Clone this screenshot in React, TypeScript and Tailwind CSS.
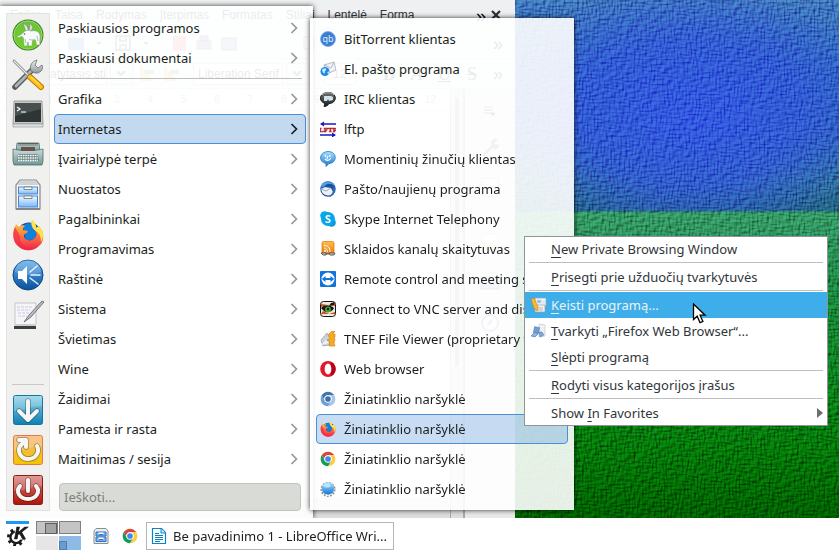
import type { ReactNode } from "react";

type IconProps = { size?: number; box: number; children: ReactNode };

function Svg({ size = 16, box, children }: IconProps) {
  return (
    <svg width={size} height={size} viewBox={`0 0 ${box} ${box}`} aria-hidden="true" className="shrink-0">
      {children}
    </svg>
  );
}

function Gradients() {
  const list: [string, string, string][] = [
    ["gGreen", "#6cc43a", "#6fd01c"],
    ["gBlue", "#5fb0ee", "#0a4f9c"],
    ["gSteel", "#eef1f3", "#8f979c"],
    ["gDown", "#8fd3ea", "#0c7fb4"],
    ["gRestart", "#f5b47c", "#f4c400"],
    ["gPower", "#d9827e", "#b01206"],
    ["gFox", "#ffd83a", "#f2204a"],
    ["gTeal", "#c9dedd", "#6d9594"],
    ["gDrawer", "#f2f8ff", "#7ab8fa"],
    ["gDark", "#6b7173", "#1c1f20"],
    ["gSky", "#a9e2ff", "#1674d0"],
    ["gOrange", "#ffc04a", "#ee7a0a"],
  ];
  return (
    <svg width="0" height="0" className="absolute" aria-hidden="true">
      <defs>
        {list.map(([id, a, b]) => (
          <linearGradient key={id} id={id} x1="0" y1="0" x2="0" y2="1">
            <stop offset="0" stopColor={a} />
            <stop offset="1" stopColor={b} />
          </linearGradient>
        ))}
      </defs>
    </svg>
  );
}

/* ---------- favourites ---------- */

const Aardvark = () => (
  <Svg size={32} box={32}>
    <circle cx="16" cy="16" r="15.500" fill="#3a7d22" />
    <circle cx="16" cy="16" r="14.200" fill="url(#gGreen)" stroke="#a9dc82" strokeWidth=".8" />
    <path d="M14 13L11 4l4 3 2 6z" fill="#e4ebe4" stroke="#6d8870" strokeWidth=".6" />
    <path d="M17 12l1-8 3 4-2 5z" fill="#d3ddd3" stroke="#6d8870" strokeWidth=".6" />
    <path
      d="M5 17.500l4-2 4-3.500c2-1 4-1 6 0 4-1 8 0 9 4 .500 3-.500 5 0 10h-3.500l-1-5-3 .500-.500 5.500H16.500l-.500-4-1 4H12l-.500-7c-.500-2-1-2.500-2-2.500L5.500 19z"
      fill="#f8faf8"
      stroke="#7f9c82"
      strokeWidth=".6"
    />
    <path d="M17 20c2 1.500 4 1 6 0M13 20l1 4M25 17l1 5" stroke="#b4c2b5" fill="none" />
    <circle cx="12.500" cy="15" r=".8" fill="#44524a" />
  </Svg>
);

const Tools = () => (
  <Svg size={32} box={32}>
    <path d="M3 28L21 10" stroke="#55595b" strokeWidth="5.500" strokeLinecap="round" />
    <path d="M4 27L21 10" stroke="#aeb4b7" strokeWidth="3" strokeLinecap="round" />
    <path d="M19 12c-2-5 1-10 6-11l-2 5 3 3 4-3c2 4-2 9-7 8z" fill="url(#gSteel)" stroke="#666c70" strokeWidth=".8" />
    <path d="M2 2l15 15" stroke="#777d80" strokeWidth="2.600" strokeLinecap="round" />
    <path d="M2 2l15 15" stroke="#eceeef" strokeWidth="1.200" strokeLinecap="round" />
    <path d="M18 18l11 10" stroke="#b97800" strokeWidth="6" strokeLinecap="round" />
    <path d="M18 18l11 10" stroke="#ffc21a" strokeWidth="4" strokeLinecap="round" />
    <path d="M19 18l9 8" stroke="#ffe88a" strokeWidth="1" />
  </Svg>
);

const Terminal = () => (
  <Svg size={32} box={32}>
    <path d="M2 2h28l1 23H1z" fill="#c7caca" stroke="#8d9192" strokeWidth=".8" />
    <rect x="3" y="4" width="26" height="19" fill="#2f3434" />
    <path d="M3 4h26v6L3 17z" fill="#4a5050" />
    <path d="M1 25h30v3H1z" fill="#dfe1e1" stroke="#8d9192" strokeWidth=".6" />
    <path d="M5 8l3 2-3 2M9 13h5" stroke="#fff" strokeWidth="1.200" fill="none" />
  </Svg>
);

const Typewriter = () => (
  <Svg size={32} box={32}>
    <path d="M5 4h22l1 9H4z" fill="url(#gTeal)" stroke="#506c6c" strokeWidth=".8" />
    <rect x="6" y="4" width="20" height="3" fill="#565f60" />
    <path d="M6 6h20" stroke="#c8dddd" />
    <path d="M1 10c6 2 24 2 30 0v12l-1 4H2l-1-4z" fill="url(#gTeal)" stroke="#506c6c" strokeWidth=".8" />
    <path d="M9 8h14v4H9z" fill="#6c4f47" />
    <path d="M6 15h20l1 7H5z" fill="#6d8482" />
    <path d="M6 16.500h20M6 19h20M6 21.500h20" stroke="#f3f8f6" strokeWidth="1.500" strokeDasharray="1.700 .7" />
  </Svg>
);

const Cabinet = () => (
  <Svg size={32} box={32}>
    <path d="M8 1h16l4 5v24H4V6z" fill="#f6f6f7" stroke="#84888a" strokeWidth="1.200" />
    <path d="M8 2h16l3 4H5z" fill="#cfd2d4" />
    <rect x="6.500" y="8" width="19" height="7" fill="url(#gDrawer)" stroke="#4a86cc" />
    <rect x="6.500" y="17" width="19" height="11" fill="url(#gDrawer)" stroke="#4a86cc" />
    <path d="M12 8h8v2.500h-8zM12 17h8v2.500h-8z" fill="#fff" stroke="#686e72" strokeWidth=".8" />
    <path d="M4 30h24" stroke="#6f7375" strokeWidth="1.500" />
  </Svg>
);

const SmallCabinet = () => (
  <Svg box={16}>
    <path d="M3 .5h10l2 2.500v12.500H1V3z" fill="#eceded" stroke="#8b8f92" />
    <path d="M3 4h10v4H3zM3 9h10v4.500H3z" fill="#6cb0f6" stroke="#2f74c4" />
    <path d="M5.500 5.500h5M5.500 10.500h5" stroke="#fff" strokeWidth="2" />
    <path d="M6 6.500h4M6 11.500h4" stroke="#3b5068" strokeWidth=".8" />
  </Svg>
);

const Firefox = ({ size = 32 }: { size?: number }) => (
  <Svg size={size} box={32}>
    <circle cx="17" cy="16" r="12.500" fill="#15429f" />
    <path d="M11 7c4-4 10-4 14 1l-2 12-9 2z" fill="#1180dc" />
    <path
      d="M20 1c4 3 4 6 4 8l3-2c6 7 5 15 1 19-6 7-17 7-23 0C1 22 0 14 3 8l1-3 3 3c2-2 5-2 6-1-2 1-2 3-2 4l5 1c-1 3-4 3-4 4 0 6 7 7 11 3 2-3 2-7-1-9-2-1-3-5-2-9z"
      fill="url(#gFox)"
    />
    <path d="M3 8c-3 6-2 14 2 18 6 7 15 6 20 2-9 3-18-2-17-11z" fill="#f22a48" opacity=".7" />
    <path d="M20 1c4 3 4 6 4 8l3-2c6 7 4 13 2 16 0-5-1-8-4-10-4-3-7-7-5-12z" fill="#ffe24a" />
  </Svg>
);

const Speaker = () => (
  <Svg size={32} box={32}>
    <circle cx="16" cy="16" r="15" fill="url(#gBlue)" stroke="#0d4687" />
    <path d="M3 13a13 13 0 0126 0c-8 4-18 4-26 0z" fill="#fff" opacity=".18" />
    <path d="M6 12h4l5-5v18l-5-5H6z" fill="#fff" />
    <path d="M18 13l7-6M19 16h9M18 19l8 6" stroke="#e8f4ff" strokeWidth="1.400" strokeLinecap="round" />
  </Svg>
);

const Writing = () => (
  <Svg size={32} box={32}>
    <path d="M3 4h21v22H3z" fill="#f5f5f7" stroke="#c4c5c8" />
    <path d="M5 8h15M5 11h13M6 14h12M6 17h9" stroke="#c9c8e6" strokeDasharray="3 1" />
    <path d="M2 27h22v3H2z" fill="#3b3e40" />
    <path d="M3 26h20" stroke="#bfc1c3" />
    <path d="M30 2L17 16l-5 7 7-5L32 3z" fill="#b8bcbe" stroke="#5c6062" strokeWidth=".8" />
  </Svg>
);

function Tile({ fill, edge, children }: { fill: string; edge: string; children: ReactNode }) {
  return (
    <Svg size={32} box={32}>
      <rect x="1.500" y="1.500" width="29" height="29" rx="2" fill={fill} stroke={edge} />
      <path d="M2 2h28v10C20 12 12 17 2 17z" fill="#fff" opacity=".2" />
      <g fill="none" strokeLinecap="round" strokeLinejoin="round" stroke="#00000055" strokeWidth="5.500">{children}</g>
      <g fill="none" strokeLinecap="round" strokeLinejoin="round" stroke="#f6f6f4" strokeWidth="4">{children}</g>
    </Svg>
  );
}

const Suspend = () => (
  <Tile fill="url(#gDown)" edge="#1477a0">
    <path d="M16 7v18M7 17l9 9 9-9" />
  </Tile>
);
const Restart = () => (
  <Tile fill="url(#gRestart)" edge="#e67a3c">
    <path d="M7 6h7v7M13 7L8 12c-3 6 1 13 8 13 8 0 12-7 9-13" />
  </Tile>
);
const Power = () => (
  <Tile fill="url(#gPower)" edge="#8f1a12">
    <path d="M16 6v11M8 12c-5 6 0 13 8 13s13-7 8-13" />
  </Tile>
);

/* ---------- applications ---------- */

const Torrent = () => (
  <Svg box={16}>
    <circle cx="8" cy="8" r="7.500" fill="#3c7fd0" stroke="#79aee6" strokeWidth=".8" />
    <text x="8" y="11" textAnchor="middle" fontSize="9" fill="#d8ecff" fontFamily="Noto Sans, sans-serif">qb</text>
  </Svg>
);
const Mail = () => (
  <Svg box={16}>
    <path d="M4 4l10-3 2 8-9 4z" fill="#f0f2f8" stroke="#9da3b4" strokeWidth=".7" />
    <path d="M4 4l7 3 3-6" fill="none" stroke="#a9aec0" strokeWidth=".8" />
    <circle cx="5" cy="10.500" r="4.500" fill="#2387e6" />
    <path d="M2 9c2-3 3 0 4-2 1 2-2 3-1 5-2 1-2-1-3-3zM7 12l2-2v3z" fill="#c6f0ff" />
  </Svg>
);
const Irc = () => (
  <Svg box={16}>
    <path d="M8 1.500c10 0 9 11 1 11-1 2-3 3-5 3l1-3C-2 10-1 2 8 1.500z" fill="url(#gDark)" stroke="#17191a" />
    <path d="M4 5h7l2 1v3l-4 1-1-2-1 2H4z" fill="#d4e1e9" />
    <path d="M2 4c3-3 9-3 12 0" stroke="#aeb6ba" fill="none" />
  </Svg>
);
const Lftp = () => (
  <Svg box={16}>
    <path d="M1 3h15M0 14h15" stroke="#2118c0" strokeWidth="1.600" />
    <path d="M0 3l4-2.500v5zM16 14l-4-2.500v5z" fill="#2118c0" />
    <text x="8" y="11" textAnchor="middle" fontSize="7" fontWeight="bold" fill="#b01018" stroke="#b01018" strokeWidth=".4" fontFamily="Liberation Serif, serif">LFTP</text>
  </Svg>
);
const Chat = () => (
  <Svg box={16}>
    <path d="M8 .5c10 0 9 12 1 12l-3 3v-3C-2 11-1 1 8 .500z" fill="url(#gSky)" stroke="#1a79b8" strokeWidth=".8" />
    <path d="M5 4l1 2M10 4v2M5 8c2 2 4 2 6-1M8 5l-1 3" stroke="#fff" strokeWidth="1.200" fill="none" />
  </Svg>
);
const Thunderbird = () => (
  <Svg box={16}>
    <circle cx="8" cy="8" r="7.700" fill="#1d4f9e" />
    <path d="M2 3C5-1 13 0 15 5c-4-3-8-3-10 0L0 7z" fill="#4ba0e8" />
    <path d="M1 8l4-2 6 1 2 4c-1 5-9 4-11 0z" fill="#eef1f3" />
    <path d="M1 8l5 2 5-3" stroke="#9caab8" fill="none" />
    <path d="M13 4c4 5 1 11-4 12 4-3 5-7 4-12z" fill="#2e72c6" />
  </Svg>
);
const Skype = () => (
  <Svg box={16}>
    <circle cx="4.500" cy="4.500" r="4.300" fill="#00aff0" />
    <circle cx="11.500" cy="11.500" r="4.300" fill="#0a95dc" />
    <circle cx="8" cy="8" r="7" fill="#08a5e8" />
    <text x="8" y="12" textAnchor="middle" fontSize="11" fontWeight="bold" fill="#fff" fontFamily="Noto Sans, sans-serif">S</text>
  </Svg>
);
const Feed = () => (
  <Svg box={16}>
    <rect x="2" y=".5" width="12" height="12" rx="1.500" fill="url(#gOrange)" stroke="#d8720c" strokeWidth=".7" />
    <circle cx="5" cy="10" r="1" fill="#fff" />
    <path d="M4 7c2 0 3.500 1.500 3.500 4M4 4.500c4 0 6 2 6 6.500" stroke="#fff" strokeWidth="1" fill="none" />
    <path d="M1 12h5v2H3zM9 12h6l-1 2h-4zM6 13h3" stroke="#555" fill="#ddd" />
  </Svg>
);
const Remote = () => (
  <Svg box={16}>
    <rect width="16" height="16" rx="1" fill="#1273dc" />
    <circle cx="8" cy="8" r="6.500" fill="#fff" />
    <path d="M1.800 8l3.700-3v2h5V5l3.700 3-3.700 3V9h-5v2z" fill="#1273dc" />
  </Svg>
);
const Vnc = () => (
  <Svg box={16}>
    <rect x=".5" y=".5" width="15" height="15" rx="3" fill="#f4e8dc" stroke="#171717" />
    <path d="M1 3l7 1 7-1v2L7 4 1 6zM1 13h14v-2l-6 2-6-3z" fill="#c65020" />
    <path d="M1 7c4-4 9-3 13 0-2 5-9 6-13 0z" fill="#171b15" />
    <circle cx="8" cy="8.500" r="2.900" fill="#44a42c" />
    <circle cx="8" cy="8" r="1.200" fill="#0b1608" />
    <path d="M11 2l4-1-1 3-5 1z" fill="#171717" />
  </Svg>
);
const Tnef = () => (
  <Svg box={16}>
    <path d="M1 9l6-7 4 6-2 6-6 1z" fill="#cdd3dc" stroke="#858b94" strokeWidth=".6" />
    <path d="M1 14l8-2-3-3z" fill="#eef1f5" />
    <path d="M8 4l4-4h3l-2 3h2v3h-1l1 2-1 4 1 3H9l1-4-3-2 3-1z" fill="#f5ac23" stroke="#cd7a12" strokeWidth=".6" />
  </Svg>
);
const Opera = () => (
  <Svg box={16}>
    <ellipse cx="8" cy="8" rx="7.800" ry="8" fill="#e2172c" />
    <path d="M11 1c6 3 6 11 0 14z" fill="#b8001a" />
    <ellipse cx="8" cy="8" rx="3.400" ry="5.400" fill="#fff" />
  </Svg>
);

type ChromeColors = { a: string; b: string; c: string; core: string };
const ChromeShape = ({ a, b, c, core }: ChromeColors) => (
  <Svg box={48}>
    <path d="M24 13H43.050A22 22 0 0 0 4.950 13L14.470 29.500A11 11 0 0 1 24 13z" fill={a} />
    <path d="M33.530 29.500L24 46A22 22 0 0 0 43.050 13H24A11 11 0 0 1 33.530 29.500z" fill={b} />
    <path d="M14.470 29.500L4.950 13A22 22 0 0 0 24 46L33.530 29.500z" fill={c} />
    <circle cx="24" cy="24" r="11" fill="#fff" />
    <circle cx="24" cy="24" r="8.500" fill={core} />
  </Svg>
);
const Chrome = () => <ChromeShape a="#db4437" b="#ffcd40" c="#0f9d58" core="#4285f4" />;
const Chromium = () => <ChromeShape a="#4374ac" b="#a4c6ea" c="#6e9fd2" core="#3f70ac" />;

const Konqueror = () => (
  <Svg box={16}>
    <circle cx="8" cy="8.500" r="6.600" fill="none" stroke="#8b9399" strokeWidth="2" strokeDasharray="1.800 1.400" />
    <circle cx="8" cy="7.500" r="6.200" fill="url(#gSky)" />
    <path d="M6 13l2 2 3-2" stroke="#e4ecf1" fill="none" />
    <ellipse cx="7" cy="4.500" rx="3.500" ry="2" fill="#c8ecff" opacity=".8" />
  </Svg>
);

const KLogo = () => (
  <Svg size={22} box={24}>
    <circle cx="10" cy="14.500" r="8.500" fill="none" stroke="#17191b" strokeWidth="3" strokeDasharray="3 3.670" />
    <circle cx="10" cy="14.500" r="6.300" fill="none" stroke="#17191b" strokeWidth="2.600" />
    <path d="M8 1h13l1 16H9z" fill="#fff" />
    <text x="8" y="16" fontSize="19" fontWeight="bold" fontStyle="italic" fill="#17191b" stroke="#17191b" strokeWidth=".8" fontFamily="Liberation Sans, sans-serif">K</text>
  </Svg>
);

const WriterDoc = () => (
  <Svg box={16}>
    <path d="M1.500 .5h9l4 4v11h-13z" fill="#fff" stroke="#0a84c8" strokeWidth="1.200" />
    <path d="M10 .5v4.500h4.500" fill="#cfe8f6" stroke="#0a84c8" />
    <path d="M4 5.500h4M4 7.500h8M4 9.500h8M4 11.500h8M4 13.500h5" stroke="#0a7cc0" />
  </Svg>
);

const EditApp = () => (
  <Svg box={16}>
    <path d="M4 1h11v8H4z" fill="#f3f7fb" stroke="#8ea7bf" strokeWidth=".8" />
    <path d="M6 3h4v3H6zM11 4h3M11 6h3" fill="#7bb0ea" stroke="#d0dcea" />
    <path d="M4 8h10v7H4z" fill="#f1f1ee" stroke="#97a0aa" strokeWidth=".7" />
    <path d="M6 11h6M6 13h6" stroke="#b9bcc0" />
    <path d="M0 2l3-1 4 9-1 4-3-3z" fill="#f8b92e" stroke="#c98212" strokeWidth=".6" />
  </Svg>
);
const ManageApp = () => (
  <Svg box={16}>
    <path d="M8 1l6 1v11l-6 1z" fill="#eef1f4" stroke="#c5cbd2" strokeWidth=".7" />
    <path d="M3 4h5v6H3z" fill="#6f9fd6" stroke="#4a79b3" strokeWidth=".6" transform="rotate(12 5 7)" />
    <path d="M0 13l4-4 3 2-3 3z" fill="#8fb4de" stroke="#4876a8" strokeWidth=".6" />
    <path d="M8 9h3l2 3-4 2z" fill="#7ea9de" stroke="#4876a8" strokeWidth=".5" />
  </Svg>
);

const Chevron = ({ active }: { active?: boolean }) => (
  <svg width="8" height="12" viewBox="0 0 8 12" fill="none" aria-hidden="true" className={active ? "text-[#1b1e20]" : "text-[#989898]"}>
    <path d="M1.500 1L6.500 6l-5 5" stroke="currentColor" strokeWidth="1.700" />
  </svg>
);

/* ---------- desktop background ---------- */

function Wallpaper() {
  return (
    <div className="absolute inset-0 overflow-hidden bg-[linear-gradient(180deg,#4078bc_0px,#3069c0_70px,#2f68b8_130px,#2f7498_180px,#246488_210px,#359a66_213px,#2f9460_236px,#168636_310px,#0a8016_400px,#047808_450px,#006000_518px)]">
      <div className="absolute top-0 right-0 h-[211px] w-[324px] bg-[radial-gradient(ellipse_at_54%_54%,#3358e0_0%,#3258d8cc_45%,#3a66c400_80%)]" />
      <svg className="absolute inset-0 size-full mix-blend-overlay" aria-hidden="true">
        <filter id="weave" x="0" y="0" width="100%" height="100%" colorInterpolationFilters="sRGB">
          <feTurbulence type="fractalNoise" baseFrequency="0.12 0.6" numOctaves="1" seed="3" result="h" />
          <feTurbulence type="fractalNoise" baseFrequency="0.6 0.12" numOctaves="1" seed="8" result="v" />
          <feComposite in="h" in2="v" operator="arithmetic" k2="0.5" k3="0.5" result="mix" />
          <feDiffuseLighting in="mix" surfaceScale="4" diffuseConstant="0.74" lightingColor="#ffffff">
            <feDistantLight azimuth="225" elevation="45" />
          </feDiffuseLighting>
        </filter>
        <rect width="100%" height="100%" filter="url(#weave)" opacity="0.55" />
      </svg>
    </div>
  );
}

/* ---------- word processor window ---------- */

function WriterWindow() {
  const menus = ["Failas", "Taisa", "Rodymas", "Įterpimas", "Formatas", "Stiliai", "Lentelė", "Forma"];
  return (
    <div className="absolute inset-y-0 left-0 flex w-[515px] flex-col bg-[#eff0f1] font-['Liberation_Sans',sans-serif] text-xs text-[#31363b]">
      <div className="flex h-[29px] items-center gap-[13px] pl-[10px]">
        {menus.map((m) => (
          <span key={m}>{m}</span>
        ))}
        <span className="mt-[2px] ml-auto text-lg leading-4 text-black">»</span>
        <svg width="10" height="10" viewBox="0 0 10 10" className="-ml-2 mr-[14px]" aria-hidden="true">
          <path d="M1 1l8 8M9 1L1 9" stroke="#2b2f33" strokeWidth="2.200" />
        </svg>
      </div>
      <div className="flex h-[30px] items-center gap-6 border-b border-[#d0d2d4] pl-[68px]">
        <svg width="300" height="20" viewBox="0 0 300 20" fill="none" aria-hidden="true">
          <path d="M0 4h16v12H0z" fill="#5a97d8" />
          <path d="M28 8h6l-3 3zM75 8h6l-3 3z" fill="#555" />
          <path d="M48 2h14v14H48zM52 2v5h6V2M52 16v-5h6v5" stroke="#555" strokeWidth="1.500" />
          <path d="M105 2h13v15h-13z" fill="#e08080" />
          <path d="M129 7h14v8h-14zM132 2h8v5h-8z" fill="#a58eb8" stroke="#666" />
          <path d="M154 4h14v12h-14z" fill="#9ab2cc" stroke="#666" />
          <path d="M236 3h10v12h-10z" stroke="#666" />
        </svg>
        <span className="ml-auto pr-3 text-lg text-[#222]">»</span>
      </div>
      <div className="flex h-[30px] items-center gap-[3px] border-b border-[#d0d2d4] pl-3">
        <span className="flex h-[22px] w-[95px] items-center justify-end border border-[#c4c6c8] bg-[#fcfcfc]">imatytasis sti</span>
        <span className="flex h-[22px] w-[23px] items-center justify-center border border-[#c4c6c8]">
          <svg width="9" height="6" aria-hidden="true"><path d="M0 0l4 4 4-4" stroke="#555" strokeWidth="2" fill="none" /></svg>
        </span>
        <svg width="54" height="16" aria-hidden="true">
          <path d="M4 0v15h14zM28 0v15h14z" fill="#e9c25c" />
          <path d="M8 4h10v4H8zM34 4h9v4h-9z" fill="#6cb070" />
        </svg>
        <span className="flex h-[22px] w-[90px] items-center border border-[#c4c6c8] bg-[#fcfcfc] pl-1">Liberation Serif</span>
        <span className="flex h-[22px] w-[23px] items-center justify-center border border-[#c4c6c8]">
          <svg width="9" height="6" aria-hidden="true"><path d="M0 0l4 4 4-4" stroke="#555" strokeWidth="2" fill="none" /></svg>
        </span>
        <span className="ml-3 flex h-[22px] w-8 items-center border border-[#c4c6c8] bg-[#fcfcfc] pl-2">12</span>
        <span className="ml-auto flex gap-4 pr-3 font-['Liberation_Serif',serif] text-lg">
          <b>B</b>
          <i>A</i>
          <u>U</u>
          <s>S</s>
          <span className="font-['Liberation_Sans',sans-serif]">»</span>
        </span>
      </div>
      <div className="flex min-h-0 flex-1">
        <div className="flex flex-1 flex-col">
          <div className="flex h-[22px] items-center justify-around border-b border-[#d9dadb] bg-[#fafafa] text-[10px] text-[#999]">
            {["7", "1", "2", "3", "4", "5", "6", "7", "8", "9", "10", "11", "12"].map((n, i) => (
              <span key={i}>{n}</span>
            ))}
          </div>
          <div className="flex-1 bg-[#fdfdfd]" />
          <div className="h-5 bg-[#dddddd]" />
        </div>
        <div className="flex w-[14px] justify-center border-x border-[#aaa] bg-[#dedede]">
          <div className="mt-2 h-[270px] w-1 rounded bg-[#a8a8a8]" />
        </div>
        <div className="flex w-[51px] flex-col items-center gap-5 border-l border-[#aaa] bg-[#e9e9e9] pt-4">
          <svg width="12" height="12" aria-hidden="true"><path d="M0 2h9M0 5h9M0 8h6M6 8h5l-2 3z" stroke="#555" /></svg>
          <svg width="20" height="20" aria-hidden="true"><path d="M2 18L12 8c-2-4 2-8 6-6l-4 4 2 2 3-1c0 5-4 6-7 4L5 19z" fill="#777" /></svg>
          <svg width="18" height="20" aria-hidden="true"><path d="M1 1h16v18H1z" fill="#fcfcfc" stroke="#aaa" /></svg>
          <svg width="18" height="20" className="mt-4" aria-hidden="true"><path d="M1 1h16v18H1z" fill="#fcfcfc" stroke="#ccc" /><path d="M2 10h14v8H2z" fill="#efc878" /></svg>
          <svg width="20" height="20" aria-hidden="true"><path d="M1 4h18v12H1z" fill="#86a6c8" stroke="#555" /><circle cx="10" cy="10" r="3" fill="#e09470" /></svg>
          <svg width="20" height="20" aria-hidden="true"><circle cx="10" cy="10" r="8" fill="#eef4fb" stroke="#6c94bd" strokeWidth="2" /><path d="M6 14l3-6 5-3-3 6z" fill="#da8870" /></svg>
        </div>
      </div>
    </div>
  );
}

/* ---------- launcher ---------- */

const recent = ["Paskiausios programos", "Paskiausi dokumentai"];
const categories = [
  "Grafika", "Internetas", "Įvairialypė terpė", "Nuostatos", "Pagalbininkai", "Programavimas", "Raštinė",
  "Sistema", "Švietimas", "Wine", "Žaidimai", "Pamesta ir rasta", "Maitinimas / sesija",
];

function CategoryRow({ label }: { label: string }) {
  const active = label === "Internetas";
  return (
    <button
      type="button"
      role="menuitem"
      className={
        "flex h-[30px] w-full items-center justify-between rounded-sm border pr-[7px] pl-[3px] text-left " +
        (active ? "border-[#4a90d9] bg-[#c3d9f0]" : "border-transparent")
      }
    >
      {label}
      <Chevron active={active} />
    </button>
  );
}

function Launcher() {
  const top: [string, ReactNode][] = [
    ["Pradžia", <Aardvark />], ["Nuostatos", <Tools />], ["Terminalas", <Terminal />], ["Rašomoji mašinėlė", <Typewriter />],
    ["Failai", <Cabinet />], ["Firefox", <Firefox />], ["Garsas", <Speaker />], ["Rašyklė", <Writing />],
  ];
  const bottom: [string, ReactNode][] = [["Pristabdyti", <Suspend />], ["Paleisti iš naujo", <Restart />], ["Išjungti", <Power />]];
  return (
    <div className="absolute top-[6px] bottom-0 left-0 flex w-[313px] gap-1 bg-white/90 pt-[7px] pr-[7px] pb-[7px] pl-[6px] shadow-[0_0_5px_rgba(0,0,0,0.8)]">
      <div className="flex w-11 flex-col items-center border border-[#e2e2e2] bg-[#eeeeed]/90 pt-[5px] pb-1">
        <div className="flex flex-col gap-2">
          {top.map(([name, icon]) => (
            <button key={name} type="button" aria-label={name} className="block size-8">{icon}</button>
          ))}
        </div>
        <div className="mt-auto mb-[9px] h-px w-8 bg-[#c8c8c8]" />
        <div className="flex flex-col gap-2">
          {bottom.map(([name, icon]) => (
            <button key={name} type="button" aria-label={name} className="block size-8">{icon}</button>
          ))}
        </div>
      </div>
      <div role="menu" className="flex flex-1 flex-col">
        {recent.map((r) => <CategoryRow key={r} label={r} />)}
        <div className="mx-1 my-[5px] h-px bg-[#bdbdbd]" />
        {categories.map((c) => <CategoryRow key={c} label={c} />)}
        <input
          type="search"
          aria-label="Ieškoti"
          placeholder="Ieškoti..."
          className="mt-auto mr-[5px] ml-[5px] h-7 rounded-sm border border-[#c2c4bf] bg-[#d9dbd6] px-1 placeholder:text-[#7d7f7b]"
        />
      </div>
    </div>
  );
}

const apps: [string, ReactNode][] = [
  ["BitTorrent klientas", <Torrent />],
  ["El. pašto programa", <Mail />],
  ["IRC klientas", <Irc />],
  ["lftp", <Lftp />],
  ["Momentinių žinučių klientas", <Chat />],
  ["Pašto/naujienų programa", <Thunderbird />],
  ["Skype Internet Telephony", <Skype />],
  ["Sklaidos kanalų skaitytuvas", <Feed />],
  ["Remote control and meeting so...", <Remote />],
  ["Connect to VNC server and disp...", <Vnc />],
  ["TNEF File Viewer (proprietary t...", <Tnef />],
  ["Web browser", <Opera />],
  ["Žiniatinklio naršyklė", <Chromium />],
  ["Žiniatinklio naršyklė", <Firefox size={16} />],
  ["Žiniatinklio naršyklė", <Chrome />],
  ["Žiniatinklio naršyklė", <Konqueror />],
];

function AppsMenu() {
  return (
    <div role="menu" className="absolute top-[18px] left-[310px] w-[264px] bg-white/90 p-[6px] shadow-[0_0_5px_rgba(0,0,0,0.8)]">
      {apps.map(([label, icon], i) => (
        <button
          key={i}
          type="button"
          role="menuitem"
          className={
            "flex h-[30px] w-full items-center gap-2 rounded-sm border px-[3px] text-left " +
            (i === 13 ? "border-[#4a90d9] bg-[#4a90d9]/30" : "border-transparent")
          }
        >
          {icon}
          <span className="whitespace-nowrap">{label}</span>
        </button>
      ))}
    </div>
  );
}

/* ---------- context menu ---------- */

type Entry = { pre?: string; key: string; rest: string; icon?: ReactNode; active?: boolean; sub?: boolean };
const groups: Entry[][] = [
  [{ key: "N", rest: "ew Private Browsing Window" }],
  [{ key: "P", rest: "risegti prie užduočių tvarkytuvės" }],
  [
    { key: "K", rest: "eisti programą...", icon: <EditApp />, active: true },
    { key: "T", rest: "varkyti „Firefox Web Browser“...", icon: <ManageApp /> },
    { key: "S", rest: "lėpti programą" },
  ],
  [{ key: "R", rest: "odyti visus kategorijos įrašus" }],
  [{ pre: "Show ", key: "I", rest: "n Favorites", sub: true }],
];

function ContextMenu() {
  return (
    <div role="menu" className="absolute top-[236px] left-[524px] w-[304px] bg-white text-[#31363b] outline-1 -outline-offset-1 outline-[#909497]">
      {groups.map((g, gi) => (
        <div key={gi}>
          {gi > 0 && <div className="mx-[5px] mb-px h-px bg-[#bcbebf]" />}
          {g.map((e) => (
            <button
              key={e.key}
              type="button"
              role="menuitem"
              className={"flex h-[26px] w-full items-center gap-1 pr-[5px] pl-[7px] text-left " + (e.active ? "bg-[#3daee9] text-[#eff0f1]" : "")}
            >
              <span className="size-4">{e.icon}</span>
              <span className="flex-1 whitespace-pre">
                {e.pre}
                <u className="decoration-1 underline-offset-[3px]">{e.key}</u>
                {e.rest}
              </span>
              {e.sub && (
                <svg width="6" height="10" aria-hidden="true"><path d="M0 0l6 5-6 5z" fill="#6b6f72" /></svg>
              )}
            </button>
          ))}
        </div>
      ))}
    </div>
  );
}

function Pointer() {
  return (
    <svg className="absolute top-[303px] left-[692px]" width="15" height="22" viewBox="0 0 15 22" aria-hidden="true">
      <path d="M1.500 1v15.500l3.700-3.300 2.800 6.500 2.900-1.200-2.800-6.300h5z" fill="#fff" stroke="#000" strokeWidth="1.300" />
    </svg>
  );
}

/* ---------- panel ---------- */

function Taskbar() {
  return (
    <div className="flex h-[34px] items-start bg-white pt-[3px] pl-[6px]">
      <button type="button" aria-label="Meniu" className="flex w-[23px] flex-col items-center gap-1 border-t-[3px] border-[#1d99f3]">
        <KLogo />
      </button>
      <div className="ml-[7px] grid grid-cols-[22px_22px] grid-rows-[13px_14px] gap-x-px gap-y-[2px]">
        <div className="flex justify-end border border-[#808080] bg-[#c4c4c4]">
          <div className="mt-px h-[11px] w-3 border border-[#5f5f5f] bg-[#a4a4a4]" />
        </div>
        <div className="border border-[#808080] bg-[#c4c4c4]" />
        <div className="bg-[#e6e6e6]" />
        <div className="flex items-end bg-[#8fbae6]">
          <div className="h-[9px] w-2 border border-[#4d80b8] bg-[#6a9bd0]" />
        </div>
      </div>
      <button type="button" aria-label="Failai" className="mt-[7px] ml-3"><SmallCabinet /></button>
      <button type="button" aria-label="Chrome" className="mt-[7px] ml-[13px]"><Chrome /></button>
      <button type="button" className="mt-px ml-2 flex h-7 w-[248px] items-center gap-[6px] border border-[#b4b6b7] bg-white px-1 text-left">
        <WriterDoc />
        <span className="truncate">Be pavadinimo 1 - LibreOffice Wri...</span>
      </button>
    </div>
  );
}

export default function App() {
  return (
    <div className="flex h-screen min-h-[552px] flex-col overflow-hidden font-['Noto_Sans',sans-serif] text-[13px] leading-[18px] text-[#1b1e20]">
      <Gradients />
      <div className="relative min-h-0 flex-1 overflow-hidden">
        <Wallpaper />
        <WriterWindow />
        <Launcher />
        <AppsMenu />
        <ContextMenu />
        <Pointer />
      </div>
      <Taskbar />
    </div>
  );
}
